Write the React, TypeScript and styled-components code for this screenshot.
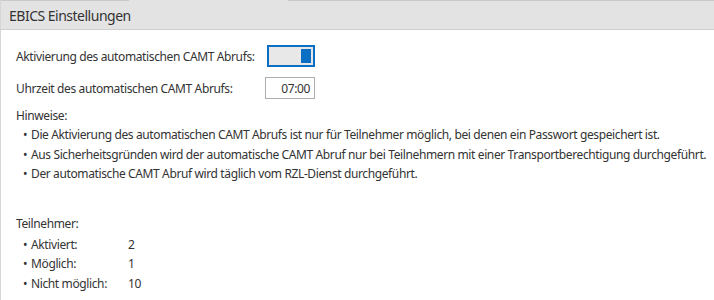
import React from "react";
import styled, { createGlobalStyle } from "styled-components";

const GlobalStyle = createGlobalStyle`
  html, body {
    margin: 0;
    padding: 0;
    background: #ffffff;
  }
  body {
    font-family: "Noto Sans", "Liberation Sans", sans-serif;
    color: #333333;
  }
`;

const hints = [
  "Die Aktivierung des automatischen CAMT Abrufs ist nur für Teilnehmer möglich, bei denen ein Passwort gespeichert ist.",
  "Aus Sicherheitsgründen wird der automatische CAMT Abruf nur bei Teilnehmern mit einer Transportberechtigung durchgeführt.",
  "Der automatische CAMT Abruf wird täglich vom RZL-Dienst durchgeführt.",
];

const participants = [
  { label: "Aktiviert:", value: 2 },
  { label: "Möglich:", value: 1 },
  { label: "Nicht möglich:", value: 10 },
];

export default function App() {
  return (
    <>
      <GlobalStyle />
      <Panel>
        <TopEdge>
          <EdgeLine style={{ width: 128 }} />
          <EdgeGap />
          <EdgeLine style={{ flex: 1 }} />
        </TopEdge>
        <Header>EBICS Einstellungen</Header>
        <Body>
          <FieldRow>
            <FieldLabel>Aktivierung des automatischen CAMT Abrufs:</FieldLabel>
            <Toggle aria-checked role="switch">
              <Thumb />
            </Toggle>
          </FieldRow>
          <FieldRow>
            <FieldLabel>Uhrzeit des automatischen CAMT Abrufs:</FieldLabel>
            <TimeBox>07:00</TimeBox>
          </FieldRow>

          <Section $gap={3}>
            <SectionTitle>Hinweise:</SectionTitle>
            <BulletList>
              {hints.map((h) => (
                <Bullet key={h}>{h}</Bullet>
              ))}
            </BulletList>
          </Section>

          <Section $gap={31}>
            <SectionTitle>Teilnehmer:</SectionTitle>
            <BulletList $offset={2}>
              {participants.map((p) => (
                <Bullet key={p.label}>
                  <CountLabel>{p.label}</CountLabel>
                  <span>{p.value}</span>
                </Bullet>
              ))}
            </BulletList>
          </Section>
        </Body>
      </Panel>
    </>
  );
}

const Panel = styled.div`
  width: 714px;
  height: 300px;
  border-left: 1px solid #d6d6d6;
  box-sizing: border-box;
  display: flex;
  flex-direction: column;
  overflow: hidden;
`;

const TopEdge = styled.div`
  display: flex;
  height: 1px;
  background: #e3e3e3;
`;

const EdgeLine = styled.div`
  height: 1px;
  background: #c9c9c9;
`;

const EdgeGap = styled.div`
  width: 159px;
`;

const Header = styled.div`
  height: 28px;
  background: #e3e3e3;
  border-bottom: 1px solid #cfcfcf;
  padding-left: 8px;
  display: flex;
  align-items: center;
  font-size: 14px;
  letter-spacing: -0.5px;
  color: #333333;
`;

const Body = styled.div`
  padding: 10px 0 0 15px;
  font-size: 12px;
  letter-spacing: -0.38px;
  white-space: nowrap;
`;

const FieldRow = styled.div`
  display: flex;
  align-items: center;
  height: 32px;
`;

const FieldLabel = styled.div`
  width: 250px;
`;

const Toggle = styled.div`
  width: 48px;
  height: 22px;
  box-sizing: border-box;
  border: 2px solid #0a6fc2;
  background: #e8e8e8;
  display: flex;
  justify-content: flex-end;
  padding: 2px;
  margin-left: 1px;
`;

const Thumb = styled.div`
  width: 10px;
  height: 100%;
  background: #0a6fc2;
`;

const TimeBox = styled.div`
  width: 50px;
  height: 22px;
  box-sizing: border-box;
  border: 1px solid #adadad;
  margin-left: -1px;
  display: flex;
  align-items: center;
  justify-content: flex-end;
  padding-right: 4px;
`;

const Section = styled.div<{ $gap: number }>`
  margin-top: ${(p) => p.$gap}px;
`;

const SectionTitle = styled.div`
  line-height: 18px;
`;

const BulletList = styled.ul<{ $offset?: number }>`
  list-style: none;
  margin: 0;
  padding: ${(p) => p.$offset ?? 0}px 0 0 7px;
`;

const Bullet = styled.li`
  display: flex;
  line-height: 19.5px;
  &::before {
    content: "•";
    width: 8px;
    flex-shrink: 0;
  }
`;

const CountLabel = styled.span`
  width: 97px;
`;
